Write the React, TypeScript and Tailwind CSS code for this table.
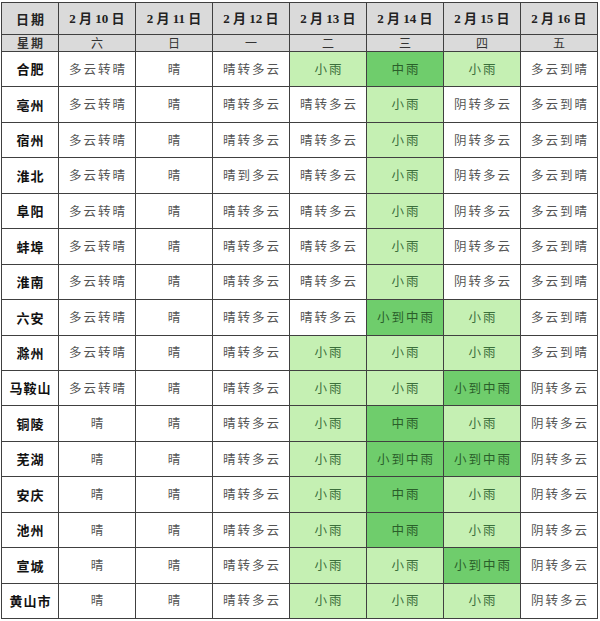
import React from 'react'

type Cell = string

// 小雨 = light green, 中雨 / 小到中雨 = dark green
const dates = ['2 月 10 日', '2 月 11 日', '2 月 12 日', '2 月 13 日', '2 月 14 日', '2 月 15 日', '2 月 16 日']
const weekdays = ['六', '日', '一', '二', '三', '四', '五']

const rows: { city: string; cells: Cell[] }[] = [
  { city: '合肥', cells: ['多云转晴', '晴', '晴转多云', '小雨', '中雨', '小雨', '多云到晴'] },
  { city: '亳州', cells: ['多云转晴', '晴', '晴转多云', '晴转多云', '小雨', '阴转多云', '多云到晴'] },
  { city: '宿州', cells: ['多云转晴', '晴', '晴转多云', '晴转多云', '小雨', '阴转多云', '多云到晴'] },
  { city: '淮北', cells: ['多云转晴', '晴', '晴到多云', '晴转多云', '小雨', '阴转多云', '多云到晴'] },
  { city: '阜阳', cells: ['多云转晴', '晴', '晴转多云', '晴转多云', '小雨', '阴转多云', '多云到晴'] },
  { city: '蚌埠', cells: ['多云转晴', '晴', '晴转多云', '晴转多云', '小雨', '阴转多云', '多云到晴'] },
  { city: '淮南', cells: ['多云转晴', '晴', '晴转多云', '晴转多云', '小雨', '阴转多云', '多云到晴'] },
  { city: '六安', cells: ['多云转晴', '晴', '晴转多云', '晴转多云', '小到中雨', '小雨', '多云到晴'] },
  { city: '滁州', cells: ['多云转晴', '晴', '晴转多云', '小雨', '小雨', '小雨', '多云到晴'] },
  { city: '马鞍山', cells: ['多云转晴', '晴', '晴转多云', '小雨', '小雨', '小到中雨', '阴转多云'] },
  { city: '铜陵', cells: ['晴', '晴', '晴转多云', '小雨', '中雨', '小雨', '阴转多云'] },
  { city: '芜湖', cells: ['晴', '晴', '晴转多云', '小雨', '小到中雨', '小到中雨', '阴转多云'] },
  { city: '安庆', cells: ['晴', '晴', '晴转多云', '小雨', '中雨', '小雨', '阴转多云'] },
  { city: '池州', cells: ['晴', '晴', '晴转多云', '小雨', '中雨', '小雨', '阴转多云'] },
  { city: '宣城', cells: ['晴', '晴', '晴转多云', '小雨', '小雨', '小到中雨', '阴转多云'] },
  { city: '黄山市', cells: ['晴', '晴', '晴转多云', '小雨', '小雨', '小雨', '阴转多云'] },
]

function cellClass(text: string) {
  if (text === '中雨' || text === '小到中雨') return 'bg-[#6fcd6c] text-[#2a5e2a]'
  if (text === '小雨') return 'bg-[#c5f0b3] text-[#3b6e3b]'
  return 'bg-white text-[#555555]'
}

export default function App() {
  return (
    <div className="w-[600px] h-[621px] bg-white pt-[2px] pl-px" style={{ fontFamily: '"Noto Sans CJK SC", sans-serif' }}>
      <div className="grid w-[597px] gap-px bg-[#404040] p-px grid-cols-[56px_repeat(7,76px)] grid-rows-[31px_16px_repeat(16,34.44px)]">
        <div className="bg-[#dadada] flex items-center justify-center pl-[2px] text-[13px] font-bold text-[#222] tracking-[2px]">日期</div>
        {dates.map((d) => (
          <div
            key={d}
            className="bg-[#dadada] flex items-center justify-center text-[13px] font-bold text-[#222] whitespace-pre"
            style={{ fontFamily: '"Liberation Serif", "Noto Sans CJK SC", serif' }}
          >
            {d}
          </div>
        ))}
        <div className="bg-[#dadada] flex items-center justify-center pl-[2px] text-[12px] font-bold text-[#333] tracking-[2px] leading-none">星期</div>
        {weekdays.map((w) => (
          <div key={w} className="bg-[#dadada] flex items-center justify-center text-[12px] text-[#333] leading-none">
            {w}
          </div>
        ))}
        {rows.map((r) => (
          <React.Fragment key={r.city}>
            <div className="bg-white flex items-center justify-center pl-px text-[13px] font-bold text-[#111] tracking-[1px]">
              {r.city}
            </div>
            {r.cells.map((c, i) => (
              <div
                key={i}
                className={`flex items-center justify-center pl-[2px] text-[12.5px] tracking-[2px] ${cellClass(c)}`}
              >
                {c}
              </div>
            ))}
          </React.Fragment>
        ))}
      </div>
    </div>
  )
}
